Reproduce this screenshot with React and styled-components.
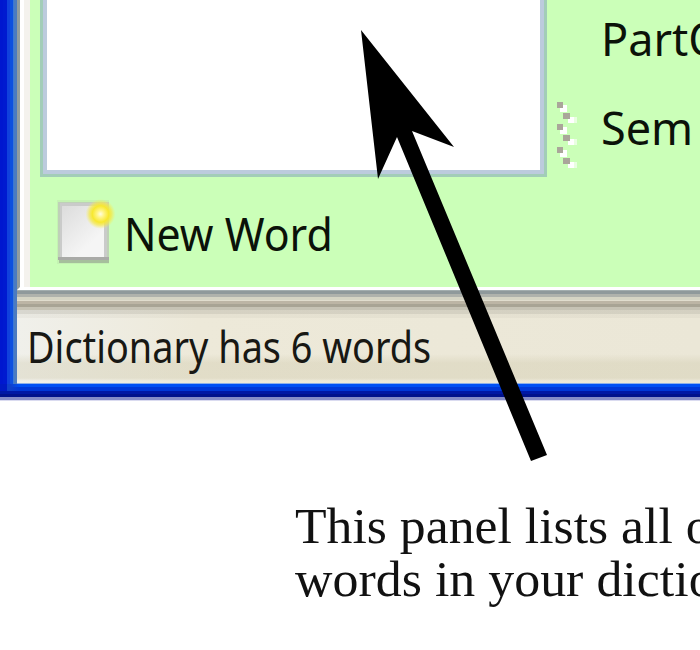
import React from "react";
import styled, { createGlobalStyle } from "styled-components";

const GlobalStyle = createGlobalStyle`
  * { box-sizing: border-box; }
  html, body { margin: 0; padding: 0; background: #fff; overflow: hidden; }
`;

const Page = styled.main`
  position: relative;
  width: 700px;
  height: 650px;
  overflow: hidden;
  background: #fff;
`;

const Window = styled.section`
  height: 401px;
  display: flex;
  flex-direction: column;
`;

const WindowBody = styled.div`
  height: 384px;
  display: flex;
`;

const LeftFrame = styled.div`
  flex: 0 0 17px;
  background: linear-gradient(90deg, #0016cf 0 3px, #0019d0 3px 7px, #1040dc 7px 10px, #0e50e0 10px 13px, #3b78d5 13px 14px, #4b7bc0 14px 17px);
`;

const Content = styled.div`
  flex: 1;
  min-width: 0;
  display: flex;
  flex-direction: column;
`;

const Workspace = styled.div`
  height: 290px;
  border-left: 3px solid #929c9e;
  border-bottom: 3px solid #fff;
  background: linear-gradient(90deg, #fff 0 4px, #f4f2ed 4px 10px, #cbffb8 10px);
  padding-left: 20px;
  display: flex;
`;

const WordColumn = styled.div`
  width: 507px;
  flex: none;
`;

const WordList = styled.div`
  height: 177px;
  border: solid #a2cdb8;
  border-width: 0 3px 3px;
  background: #fff;
  box-shadow: inset 4px 0 #bccbdd, inset -4px 0 #bccbdd, inset 0 -4px #bccbdd;
`;

const NewWordButton = styled.div`
  display: flex;
  align-items: flex-start;
  padding: 22px 0 0 12px;
`;

const Label = styled.span`
  display: block;
  white-space: nowrap;
  font-family: "Noto Sans", sans-serif;
  font-size: ${({ $size }) => $size || 45}px;
  line-height: 54px;
  color: ${({ $color }) => $color || "#0b1209"};
  transform: scaleX(${({ $stretch }) => $stretch || 1});
  transform-origin: 0 0;
`;

const ButtonText = styled.div`
  padding: 8px 0 0 8px;
`;

const Splitter = styled.div`
  width: 23px;
  flex: none;
  padding: 98px 0 0 9px;
`;

const Fields = styled.div`
  display: flex;
  flex-direction: column;
  gap: 35px;
  padding: 12px 0 0 31px;
`;

const StatusEdge = styled.div`
  height: 20px;
  background: linear-gradient(#a2adae 0 1px, #8f999b 1px 4px, #afb2ac 4px 7px, #d5d4c4 7px 10px, #e0ddce 10px 11px, #bcb5a5 11px 14px, #a8a495 14px 17px, #c6c3b5 17px 20px);
`;

const StatusBar = styled.div`
  height: 74px;
  padding: 10px 0 0 10px;
  background:
    linear-gradient(rgba(160, 157, 145, .3) 0 4px, rgba(180, 175, 160, .12) 4px 8px, transparent 8px 44px, rgba(196, 190, 155, .28) 53px 68px, transparent 71px 73px, #8eb0e8 73px),
    linear-gradient(90deg, #f0f0eb 0, #ede9d9 180px, #ebe7d7 100%);
`;

const BottomFrame = styled.div`
  height: 17px;
  background:
    linear-gradient(90deg, #0019c4 0 7px, #1040ca 7px 10px, transparent 20px) 0 0 / 100% 7px no-repeat,
    linear-gradient(#0050f4 0 3px, #0038d8 3px 7px, #0018a5 7px 10px, #00128c 10px 13px, #858dc8 13px 16px, #dadbf0 16px);
`;

const Caption = styled.p`
  margin: 99px 0 0 295px;
  width: max-content;
  white-space: pre;
  font: 51px/53px "Liberation Serif", serif;
  color: #111;
`;

const CaptionLine = styled.span`
  display: block;
  transform: scaleX(${({ $stretch }) => $stretch});
  transform-origin: 0 0;
`;

const Pointer = styled.svg`
  position: absolute;
  inset: 0;
  pointer-events: none;
`;

function PageIcon() {
  return (
    <svg width="64" height="66" viewBox="-2 0 64 66">
      <defs>
        <linearGradient id="paper" x1="0" y1="0" x2=".75" y2="1">
          <stop stopColor="#dcdcdc" /><stop offset=".8" stopColor="#f5f5f5" />
        </linearGradient>
        <radialGradient id="spark">
          <stop stopColor="#fffde0" /><stop offset=".25" stopColor="#fff481" />
          <stop offset=".55" stopColor="#f7e82f" /><stop offset=".75" stopColor="#f5e844" stopOpacity=".7" />
          <stop offset="1" stopColor="#f5ef60" stopOpacity="0" />
        </radialGradient>
      </defs>
      <path d="M3 1H55V65H3Z" fill="#aecea0" opacity=".25" />
      <path d="M4 3H55V59H4Z" fill="#bfd0b8" />
      <path d="M6 4H53V59H6Z" fill="#cacbca" />
      <path d="M8 7H50V58H8Z" fill="url(#paper)" />
      <path d="M4 58H55V61H4Z" fill="#a9aaa7" />
      <path d="M5 61H55V64H5Z" fill="#a6bf9c" />
      <circle cx="46.5" cy="15" r="15" fill="url(#spark)" />
    </svg>
  );
}

function Grip() {
  const rows = [0, 22, 45];
  return (
    <svg width="22" height="74" viewBox="0 0 22 74">
      {rows.map((y) => (
        <g key={y} transform={`translate(1 ${y + 4})`}>
          <path d="M3 3H10V10H3ZM11 15H17V21H11Z" fill="#fff" />
          <path d="M17 15H20V21H17Z" fill="#e9ffe1" />
          <path d="M0 0H6V6H0ZM6 11H13V17H6Z" fill="#aaa69a" />
        </g>
      ))}
    </svg>
  );
}

export default function App() {
  return (
    <Page>
      <GlobalStyle />
      <Window>
        <WindowBody>
          <LeftFrame />
          <Content>
            <Workspace>
              <WordColumn>
                <WordList />
                <NewWordButton>
                  <PageIcon />
                  <ButtonText><Label $stretch={0.952}>New Word</Label></ButtonText>
                </NewWordButton>
              </WordColumn>
              <Splitter><Grip /></Splitter>
              <Fields>
                <Label>PartO</Label>
                <Label>Sem</Label>
              </Fields>
            </Workspace>
            <StatusEdge />
            <StatusBar><Label $size={43} $color="#181814" $stretch={0.88}>Dictionary has 6 words</Label></StatusBar>
          </Content>
        </WindowBody>
        <BottomFrame />
      </Window>
      <Caption>
        <CaptionLine $stretch={1.014}>This panel lists all o</CaptionLine>
        <CaptionLine $stretch={1.018}>words in your dictio</CaptionLine>
      </Caption>
      <Pointer width="700" height="650" viewBox="0 0 700 650">
        <path d="M361 30L454 147L412 131L547 455L531 461L397 137L378 179Z" fill="#000" />
      </Pointer>
    </Page>
  );
}
